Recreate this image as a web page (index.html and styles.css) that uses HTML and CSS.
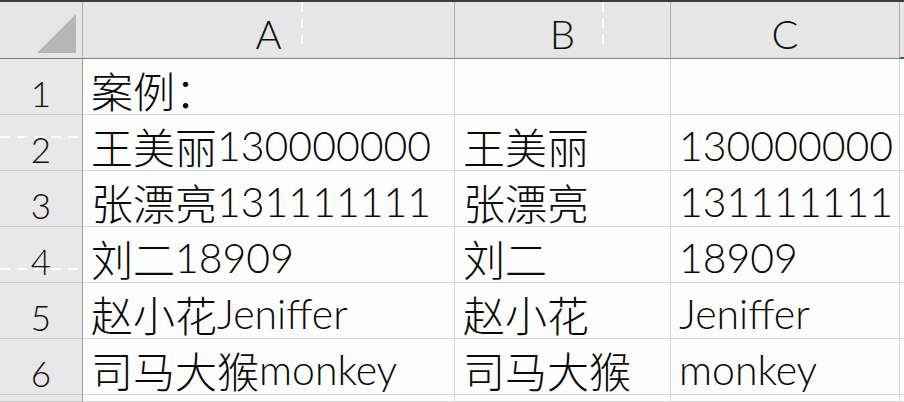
FILE: index.html
```html
<!DOCTYPE html>
<html lang="zh-CN">
<head>
<meta charset="utf-8">
<title>Sheet</title>
<link rel="stylesheet" href="styles.css">
</head>
<body>
<div class="sheet">
  <div class="corner"><span class="tri"></span></div>
  <div class="colhead">A</div>
  <div class="colhead">B</div>
  <div class="colhead">C</div>
  <div class="colhead sel"></div>

  <div class="rowhead">1</div>
  <div class="cell"><span class="cjk">案例：</span></div>
  <div class="cell"></div>
  <div class="cell"></div>
  <div class="cell edge"></div>

  <div class="rowhead">2</div>
  <div class="cell"><span class="cjk">王美丽</span>130000000</div>
  <div class="cell"><span class="cjk">王美丽</span></div>
  <div class="cell">130000000</div>
  <div class="cell edge"></div>

  <div class="rowhead">3</div>
  <div class="cell"><span class="cjk">张漂亮</span>131111111</div>
  <div class="cell"><span class="cjk">张漂亮</span></div>
  <div class="cell">131111111</div>
  <div class="cell edge"></div>

  <div class="rowhead">4</div>
  <div class="cell"><span class="cjk">刘二</span>18909</div>
  <div class="cell"><span class="cjk">刘二</span></div>
  <div class="cell">18909</div>
  <div class="cell edge"></div>

  <div class="rowhead">5</div>
  <div class="cell"><span class="cjk">赵小花</span>Jeniffer</div>
  <div class="cell"><span class="cjk">赵小花</span></div>
  <div class="cell">Jeniffer</div>
  <div class="cell edge"></div>

  <div class="rowhead">6</div>
  <div class="cell"><span class="cjk">司马大猴</span>monkey</div>
  <div class="cell"><span class="cjk">司马大猴</span></div>
  <div class="cell">monkey</div>
  <div class="cell edge"></div>

  <div class="rowhead"></div>
  <div class="cell"></div>
  <div class="cell"></div>
  <div class="cell"></div>
  <div class="cell edge"></div>

  <span class="dash-h d1"></span>
  <span class="dash-h d2"></span>
  <span class="dash-v d3"></span>
  <span class="dash-v d4"></span>
</div>
</body>
</html>
```

FILE: styles.css
```css
html, body {
  margin: 0;
  padding: 0;
  background: #fdfdfd;
}

.sheet {
  position: relative;
  width: 904px;
  height: 402px;
  box-sizing: border-box;
  border-top: 2px solid #3a3a3a;
  display: grid;
  grid-template-columns: 83px 372px 216px 229px 1fr;
  grid-template-rows: 57px repeat(6, 56px) 1fr;
  overflow: hidden;
  font-family: Lato, "Noto Sans CJK SC", sans-serif;
}

.sheet > div {
  box-sizing: border-box;
  border-right: 1px solid #d6d6d6;
  border-bottom: 1px solid #d6d6d6;
  min-width: 0;
  white-space: nowrap;
}

.corner {
  background: #e6e6e6;
  display: flex;
  justify-content: flex-end;
  align-items: flex-end;
  padding: 0 6px 5px 0;
}
.sheet > .corner {
  border-right-color: #a9a9a9;
  border-bottom-color: #7c7c7c;
}

.tri {
  width: 39px;
  height: 39px;
  background: #b6b6b6;
  clip-path: polygon(100% 0, 100% 100%, 0 100%);
}

.colhead {
  background: #e6e6e6;
  color: #111;
  font-size: 40px;
  font-weight: 300;
  line-height: 48px;
  display: flex;
  justify-content: center;
  align-items: flex-end;
}
.sheet > .colhead {
  border-right-color: #ababab;
  border-bottom-color: #7c7c7c;
}
.sheet > .colhead.sel {
  border-bottom: 2px solid #217346;
}

.rowhead {
  background: #e8e8e8;
  color: #111;
  font-size: 35px;
  font-weight: 300;
  line-height: 42px;
  display: flex;
  justify-content: center;
  align-items: flex-end;
}
.sheet > .rowhead {
  border-right-color: #9a9a9a;
  border-bottom-color: #c9c9c9;
}

.cell {
  background: #fdfdfd;
  color: #0a0a0a;
  font-size: 41px;
  font-weight: 300;
  line-height: 48px;
  display: flex;
  align-items: flex-end;
  padding: 0 0 0 8px;
}

.cjk {
  font-family: "Noto Sans CJK SC", sans-serif;
  font-size: 42px;
  font-weight: 300;
}

.dash-h, .dash-v {
  position: absolute;
  pointer-events: none;
}
.dash-h {
  left: 0;
  width: 82px;
  height: 2px;
  background: repeating-linear-gradient(90deg, rgba(255,255,255,0.9) 0 10px, transparent 10px 17px);
}
.d1 { top: 134px; }
.d2 { top: 266px; }
.dash-v {
  top: 0;
  width: 2px;
  height: 48px;
  background: repeating-linear-gradient(180deg, rgba(255,255,255,0.9) 0 10px, transparent 10px 16px);
}
.d3 { left: 301px; }
.d4 { left: 602px; }
```
